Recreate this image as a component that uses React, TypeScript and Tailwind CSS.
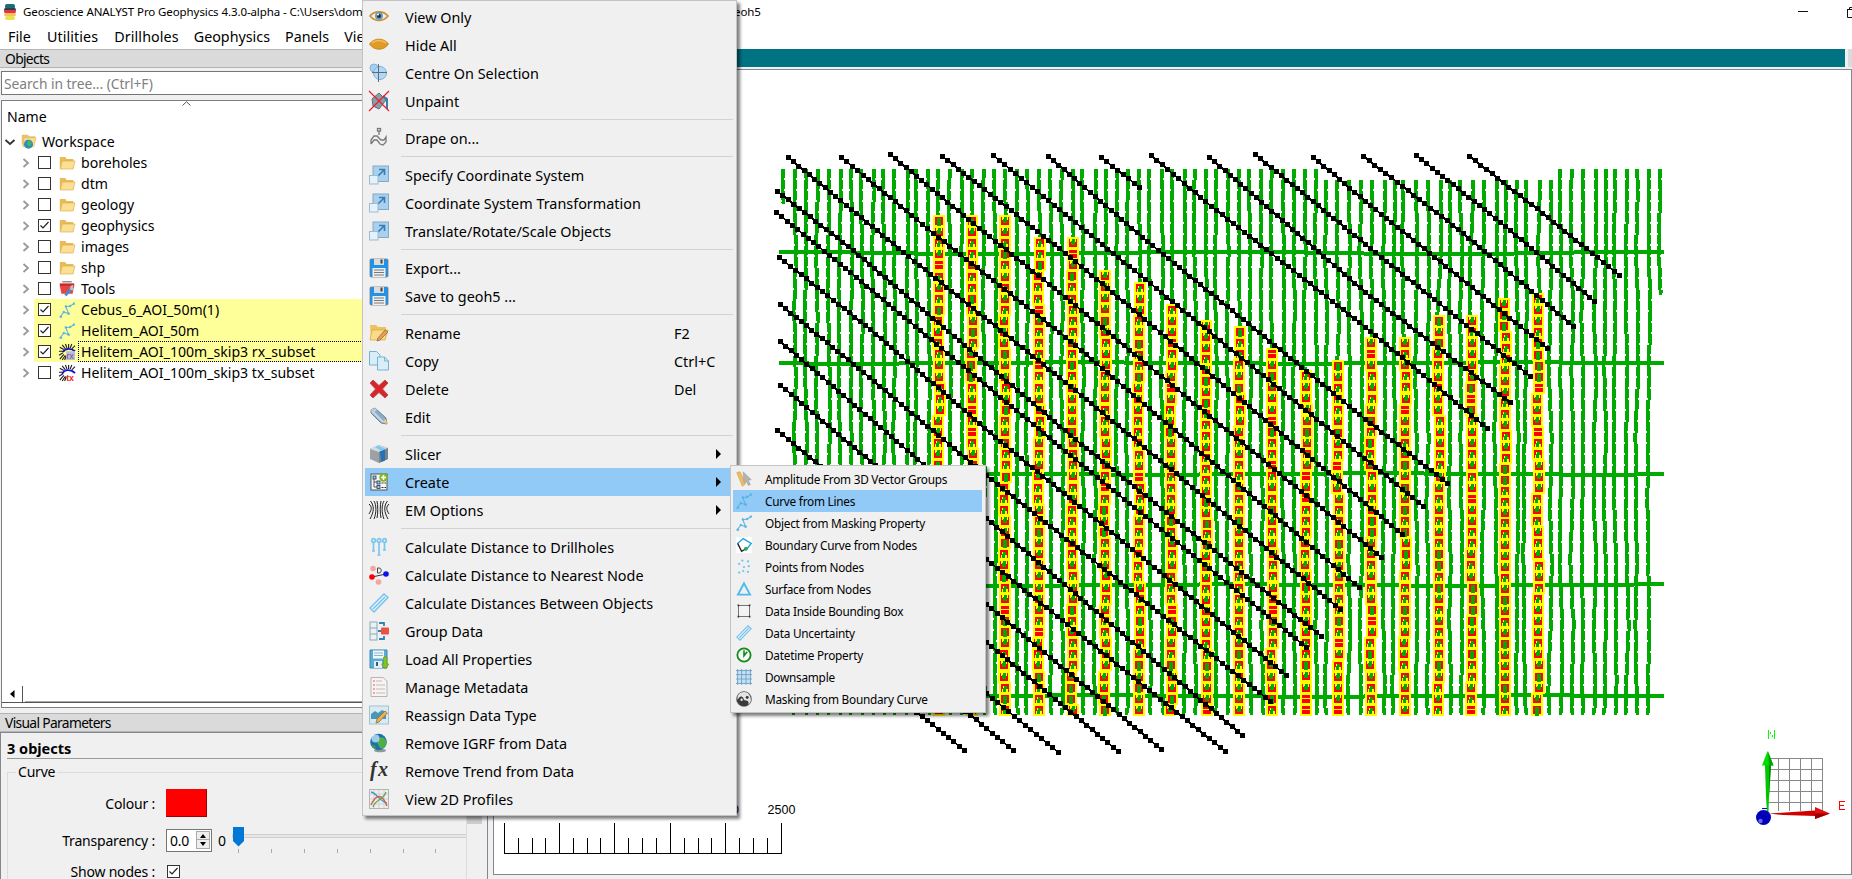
import React from "react";

/* ---------- icons ---------- */

type IconName =
  | "eye" | "lid" | "centre" | "unpaint" | "drape" | "scale" | "save" | "rename" | "copy" | "delete" | "edit"
  | "slicer" | "create" | "em" | "drill" | "nearest" | "ruler" | "group" | "load" | "meta" | "reassign"
  | "globe" | "fx" | "profiles" | "amplitude" | "curve" | "boundary" | "points" | "surface" | "box"
  | "clock" | "grid" | "yin" | "folder" | "workspace" | "tools" | "rx" | "tx";

const loop = "M8 1C9 5 9 14 8 18M5 1C7.500 5 7.500 13 5 19M1.500 1C5.500 6 5 12 1 19M0 4C3 7 3 9 0 14M12 1C11 5 11 14 12 18M15 1C12.500 5 12.500 13 15 19M18.500 1C14.500 6 15 12 19 19M20 4C17 7 17 9 20 14";
const coil = "M1 19L6 13M4 20L8 14M7 20L9 15M0 14L5 11M0 9L5 9M1 4L6 7M4 1L8 6M8 0L10 5M12 0L12 5M16 0L14 5M20 2L16 6";

const glyphs: Record<IconName, React.ReactNode> = {
  eye: (<><path d="M1 9C5 4 14 3 19 9C14 15 6 15 1 9Z" fill="#f4efe6" stroke="#c98f33" strokeWidth="1.600" /><circle cx="10" cy="9" r="4" fill="#6d9cb8" /><circle cx="10" cy="9" r="2" fill="#1c2f3a" /><circle cx="9" cy="7.500" r="1" fill="#fff" /></>),
  lid: (<><path d="M.5 9C5 2.500 15 2.500 19.500 9C15 16 5 16 .5 9Z" fill="#e09b26" stroke="#c27d12" strokeWidth=".8" /><path d="M3 8C7 4.500 13 4.500 17 8" fill="none" stroke="#f3c15c" strokeWidth="1.500" /></>),
  centre: (<><circle cx="5" cy="5" r="4" fill="#a6d0ee" stroke="#84b4d8" /><circle cx="11" cy="10" r="6.500" fill="#b2d9f3" stroke="#7fb0d4" /><path d="M9.500 1V19M3 9.500H18" stroke="#5a6e80" strokeWidth="1" /></>),
  unpaint: (<><path d="M3 8L10 2L17 9L10 18L4 15Z" fill="#8b9dab" stroke="#5d6c79" /><path d="M14 5L18 8V18" stroke="#3f7ca5" strokeWidth="2" fill="none" /><path d="M0 0L20 20M20 0L0 20" stroke="#e8202c" strokeWidth="1.200" /></>),
  drape: (<g fill="none" stroke="#777" strokeWidth="1.300"><rect x="8.500" y=".5" width="3" height="2.500" /><path d="M10 3V7M2 16V12L5 8L8 8L12 12L15 12L17 9V14L14 17L11 16L8 12L5 12L2 16" /></g>),
  scale: (<><rect x="4" y="1" width="15.500" height="15.500" fill="#a9d0ef" stroke="#82a9c6" /><path d="M9 11L15 5M10 4.500H15.500V10" stroke="#357db4" strokeWidth="1.600" fill="none" /><rect x=".5" y="10.500" width="8.500" height="8.500" fill="#e3f2fb" stroke="#9fbbce" /></>),
  save: (<><rect x="1" y="1" width="18" height="18" rx="1" fill="#1e93ee" stroke="#777f87" strokeWidth=".8" /><rect x="5" y="1" width="10" height="6" fill="#dcdcdc" /><rect x="11.500" y="1.500" width="2" height="4" fill="#444" /><rect x="3.500" y="10" width="13" height="9" fill="#f0f0f0" /><path d="M5 12H15M5 14.500H15M5 17H15" stroke="#777" strokeWidth="1.200" /></>),
  rename: (<><path d="M1 2H7L9 4H17V16H2Z" fill="#efc35c" /><path d="M3 7H19L16 17H1Z" fill="#fadb87" stroke="#d9a441" strokeWidth=".7" /><path d="M8 18L9 15L16 7L19 9L11 17Z" fill="#e8a04c" stroke="#8c6d4d" strokeWidth=".8" /></>),
  copy: (<g fill="#d9eef8" stroke="#74b4d0"><path d="M.5 .5H7.500L11 4V14H.5Z" /><path d="M8.500 6H15.500L19.500 10V19H8.500Z" /><path d="M15.500 6V10H19.500" fill="none" /></g>),
  delete: (<path d="M1 4L4 1L10 6.500L16 1L19 4L13.500 10L19 16L16 19L10 13.500L4 19L1 16L6.500 10Z" fill="#d8252b" stroke="#b2484b" strokeWidth=".8" />),
  edit: (<><path d="M2 3L6 1L17 11L18 17L12 16L2 6Z" fill="#8cabc9" stroke="#5b7087" strokeWidth=".8" /><path d="M4 5L14 15" stroke="#c3d9ea" strokeWidth="2" /><path d="M13 15L17 12L18 17Z" fill="#efca86" /><path d="M2 3L6 1L8 3L3 7Z" fill="#c5ccd4" /></>),
  slicer: (<><path d="M1 5L10 1L19 4V15L10 19L1 15Z" fill="#9aa1a7" /><path d="M1 5L10 1L19 4L10 8Z" fill="#d5dbdf" /><path d="M10 8L19 4V15L10 19Z" fill="#7b8288" /><path d="M11 7.500L16 5V16.500L12.500 18Z" fill="#2172b8" /><path d="M6 3L9 1.500L17 5L12 7Z" fill="#7ccbf0" /></>),
  create: (<><rect x="2" y="2" width="16" height="16" fill="#f8f8f8" stroke="#555" /><path d="M5 6V15H8M5 10H8" stroke="#234" strokeWidth=".8" fill="none" /><g fill="#9fd0f2" stroke="#234" strokeWidth=".8"><rect x="4" y="4" width="3" height="3" /><rect x="8" y="9" width="3" height="3" /><rect x="8" y="13.500" width="3" height="3" /></g><path d="M12.500 11H17M12.500 15.500H17" stroke="#234" strokeDasharray="2 1" /><circle cx="14.500" cy="5.500" r="4.200" fill="#83b81a" /><path d="M14.500 3V8M12 5.500H17" stroke="#fff" strokeWidth="1.600" /></>),
  em: (<path d={loop} stroke="#222" fill="none" strokeWidth="1" />),
  drill: (<g stroke="#7bc6ee" fill="none" strokeWidth="1.700"><circle cx="4.500" cy="3.500" r="1.800" /><circle cx="10" cy="3.500" r="1.800" /><circle cx="15.500" cy="3.500" r="1.800" /><path d="M4.500 5V14M10 5V18M15.500 5V13M3 14H6M8.500 18H11.500M14 13H17" /></g>),
  nearest: (<><path d="M3 12L17 9" stroke="#333" /><circle cx="4" cy="3.500" r="2.800" fill="#f5a3a3" /><circle cx="9.500" cy="17" r="2.800" fill="#f5a3a3" /><circle cx="3" cy="12" r="2.800" fill="#f00" /><circle cx="17" cy="9" r="2.800" fill="#0a14f0" /><path d="M8.500 3V8H10C13 8 13 3 10 3Z" fill="none" stroke="#444" /></>),
  ruler: (<g stroke="#75bfe8" strokeWidth="1.300"><path d="M1 15L15 1L19 4.500L5 19Z" fill="#dff1fb" /><path d="M4 16L16 4" /></g>),
  group: (<><rect x="1" y="1" width="7" height="18" fill="#e9f1f5" stroke="#8da7b6" /><path d="M1 7H8M1 13H8" stroke="#8da7b6" /><path d="M10 2H15V5M10 18H15V15M12 10H9" stroke="#2b84bd" strokeWidth="1.800" fill="none" /><rect x="12" y="6.500" width="8" height="7" rx="1" fill="#ec5244" /></>),
  load: (<><path d="M1 1H18V19H1Z" fill="#5badd9" stroke="#4187b1" /><rect x="4" y="1.500" width="11" height="8" fill="#f3f8fa" /><path d="M5 4H14M5 6.500H14" stroke="#8fb3c8" /><rect x="5" y="12" width="8" height="7" fill="#e5edf2" /><path d="M8 13V17" stroke="#35617e" strokeWidth="2" /><path d="M14.500 8H18V15H20L16.200 20L12.500 15H14.500Z" fill="#86c11d" stroke="#669b10" strokeWidth=".6" /></>),
  meta: (<><path d="M2 .5H14L18 4V19.500H2Z" fill="#f6f3f2" stroke="#b7b4b2" /><path d="M4 4H6M4 8H6M4 12H6M4 16H6" stroke="#e88f8a" strokeWidth="1.500" /><path d="M7 4H13M7 8H16M7 12H16M7 16H16" stroke="#c0bcba" strokeWidth="1.200" /></>),
  reassign: (<><rect x=".5" y="1" width="19" height="18" fill="#d8ebf3" stroke="#9fc3d2" /><path d="M2 9L6 6L9 8L13 5L17 7V14H2Z" fill="#4b98b5" /><path d="M7 18L8 14L16 6L18.500 8L10 17Z" fill="#eeb04f" stroke="#8e7048" strokeWidth=".8" /></>),
  globe: (<><ellipse cx="11" cy="17.500" rx="6" ry="1.800" fill="#8c979f" /><circle cx="9.500" cy="9" r="8.300" fill="#1d6fb0" /><path d="M10 5C14 3 17 6 17.500 10C16 15 13 17 11 15C9 12 7 9 10 5Z" fill="#4fae48" /><path d="M2 12C5 11 7 13 7 16C4 15 3 14 2 12Z" fill="#3c9c4a" /><circle cx="6.500" cy="5.500" r="4" fill="#c9ebfa" opacity=".75" /></>),
  fx: (<text x="1" y="15" fontFamily="Liberation Serif, serif" fontStyle="italic" fontWeight="700" fontSize="20" textLength="18" fill="#333">fx</text>),
  profiles: (<><rect x=".5" y=".5" width="19" height="19" fill="#eee" stroke="#b4b4b4" /><path d="M5 1V19M10 1V19M15 1V19M1 5H19M1 10H19M1 15H19" stroke="#d2d2d2" /><path d="M2 3C8 4 11 13 18 14" stroke="#3b9ac4" fill="none" strokeWidth="1.300" /><path d="M2 16C7 5 13 4 18 17" stroke="#d06045" fill="none" strokeWidth="1.300" /><path d="M4 18C6 10 14 12 17 3" stroke="#68a356" fill="none" strokeWidth="1.300" /></>),
  amplitude: (<><path d="M1 2L5 1L12 16L8 19Z" fill="#efbf5f" stroke="#d39b3c" strokeWidth=".8" /><path d="M9 1L19 11L15 11.500L18 17L15.500 18L13 13L10 15Z" fill="#b3b3b3" stroke="#999" strokeWidth=".7" /></>),
  curve: (<g stroke="#58b4e4" fill="#58b4e4"><path d="M2 18L6 12.500L12 14.500L8.500 6L14 5L19 2" fill="none" strokeWidth="1.300" /><path d="M1 17.500H3.500V19.500H1ZM5 11.500H7V13.500H5ZM11 13.500H13V15.500H11ZM7.500 4.500H9.500V6.500H7.500ZM13 4H15V6H13ZM17.500 1H19.500V3H17.500Z" strokeWidth=".6" /></g>),
  boundary: (<><rect width="20" height="20" fill="#fff" /><path d="M2 8L9 2L19 8L12 17" stroke="#1ba3dc" strokeWidth="1.700" fill="none" /><path d="M2 8L7 18L12 15" stroke="#222" strokeWidth="1.700" fill="none" /><circle cx="12.500" cy="14.500" r="2.400" fill="#28b04a" /></>),
  points: (<g fill="#6cc3ef"><circle cx="4" cy="6" r="1.400" /><circle cx="8" cy="2" r="1.400" /><circle cx="15" cy="3" r="1.400" /><circle cx="10" cy="10" r="1.400" /><circle cx="16" cy="9" r="1.400" /><circle cx="4" cy="17" r="1.400" /><circle cx="9" cy="15" r="1.400" /><circle cx="15" cy="16" r="1.400" /></g>),
  surface: (<path d="M10 3L17.500 17H2.500Z" fill="none" stroke="#4fb9ec" strokeWidth="2.400" />),
  box: (<><rect x="3" y="3" width="14" height="14" fill="#f3f3f3" stroke="#555" /><path d="M2 2H4V4H2ZM16 2H18V4H16ZM2 16H4V18H2ZM16 16H18V18H16Z" fill="#333" /></>),
  clock: (<><circle cx="10" cy="10" r="8.300" fill="#f6fbf6" stroke="#128a1c" strokeWidth="2.200" /><path d="M10 4V11L14 6" stroke="#128a1c" strokeWidth="2" fill="none" /></>),
  grid: (<><rect x="1" y="1" width="18" height="18" fill="#c4e2f6" /><path d="M0 2H20M0 7H20M0 12.500H20M0 18H20M2 0V20M7 0V20M12.500 0V20M18 0V20" stroke="#6f9fc0" strokeWidth="1.100" /></>),
  yin: (<><circle cx="10" cy="10" r="9.500" fill="#3a3a3a" stroke="#777" strokeWidth=".6" /><path d="M8 1.500A9 9 0 0 1 15 17.500C17 14 15 12 12 12C9 12 10 8 7 7C4 6 3 10 2 11C1 6 4 2 8 1.500Z" fill="#e4e4e4" /><circle cx="14" cy="8" r="1.800" fill="#333" /><circle cx="7" cy="11" r="1.500" fill="#eee" /></>),
  folder: (<><path d="M1 2.500H8L9.500 5H18V17H1Z" fill="#eabb57" /><path d="M4 7.500H20L17.500 17.500H1.500Z" fill="#fbdf92" stroke="#ddac4c" strokeWidth=".8" /></>),
  workspace: (<><path d="M1 1H9L11 3H19V8L16 17H3L1 13Z" fill="#ecc168" /><path d="M4 5H20L17 17H3Z" fill="#f9dc92" stroke="#dbb05a" strokeWidth=".7" /><circle cx="10" cy="13.500" r="6" fill="#2c8dc2" /><path d="M10 9C14 9 15 12 13 15C10 18 9 15 8 12Z" fill="#53b64d" /></>),
  tools: (<><path d="M1 3H19V7H1Z" fill="#c62827" /><path d="M1 6H19L17 16H3Z" fill="#e54740" /><path d="M4 1H16" stroke="#777" strokeWidth="1.500" /><path d="M8 18L15 10" stroke="#3f8fd0" strokeWidth="3.500" /><path d="M14 11C13 7 15 5 18 5L17 8L19 9C19 12 16 12 14 11Z" fill="#b6c2ca" /></>),
  rx: (<><path d={coil} stroke="#222" strokeWidth="1.400" fill="none" /><path d="M5 10C8 5 15 5 20 9" stroke="#1414a4" strokeWidth="2.200" fill="none" /><rect x="9" y="9" width="11" height="11" fill="#aebfe8" /><text x="9.500" y="18.500" fontSize="11" fontFamily="Liberation Sans, sans-serif" fill="#b03a62">rx</text></>),
  tx: (<><path d={coil} stroke="#222" strokeWidth="1.400" fill="none" /><path d="M4 11C7 5 15 5 20 10" stroke="#1414d4" strokeWidth="2.400" fill="none" /><text x="9" y="20" fontSize="11" fontWeight="700" fontFamily="Liberation Sans, sans-serif" fill="#e22">tx</text></>),
};

function Icon({ name, size = 20 }: { name: IconName; size?: number }) {
  return <svg width={size} height={size} viewBox="0 0 20 20" className="shrink-0 overflow-visible">{glyphs[name]}</svg>;
}

/* ---------- object tree ---------- */

function Check({ on }: { on?: boolean }) {
  return (
    <span className="flex h-[13px] w-[13px] shrink-0 items-center justify-center border border-[#333] bg-white">
      {on && <svg width="11" height="11" viewBox="0 0 11 11"><path d="M1.500 5.500L4 8L9.500 2" fill="none" stroke="#222" strokeWidth="1.200" /></svg>}
    </span>
  );
}

type TreeItem = { label: string; icon: IconName; on?: boolean; selected?: boolean; focus?: boolean };
const tree: TreeItem[] = [
  { label: "boreholes", icon: "folder" },
  { label: "dtm", icon: "folder" },
  { label: "geology", icon: "folder" },
  { label: "geophysics", icon: "folder", on: true },
  { label: "images", icon: "folder" },
  { label: "shp", icon: "folder" },
  { label: "Tools", icon: "tools" },
  { label: "Cebus_6_AOI_50m(1)", icon: "curve", on: true, selected: true },
  { label: "Helitem_AOI_50m", icon: "curve", on: true, selected: true },
  { label: "Helitem_AOI_100m_skip3 rx_subset", icon: "rx", on: true, selected: true, focus: true },
  { label: "Helitem_AOI_100m_skip3 tx_subset", icon: "tx" },
];

function TreeRow({ item }: { item: TreeItem }) {
  return (
    <div className="flex h-[21px] shrink-0 pl-5">
      <div className="flex w-3 shrink-0 items-center">
        <svg width="10" height="12" viewBox="0 0 10 12"><path d="M1.500 2L6 6L1.500 10" fill="none" stroke="#999" strokeWidth="1.800" /></svg>
      </div>
      <div className={item.selected ? "flex grow items-center bg-[#ffff99] pl-1" : "flex grow items-center pl-1"}>
        <Check on={item.on} />
        <span className="ml-2 flex"><Icon name={item.icon} size={16} /></span>
        <span className={item.focus ? "ml-[3px] h-[21px] grow border border-dotted border-black pl-[2px] leading-[19px]" : "ml-1.5 leading-[21px]"}>{item.label}</span>
      </div>
    </div>
  );
}

function PanelTitle({ children }: { children: React.ReactNode }) {
  return <div className="flex h-[19px] shrink-0 items-center border-y border-[#b4b4b4] bg-[#dadada] pt-0.5 pl-[5px] text-[13.800px] tracking-[-0.65px]">{children}</div>;
}

function ObjectsPanel() {
  return (
    <section className="flex shrink-0 flex-col">
      <PanelTitle>Objects</PanelTitle>
      <div className="mt-[3px] ml-px flex h-6 items-center border border-[#767676] bg-white pt-0.5 pl-[2px] text-[13.800px] tracking-[-0.05px] text-[#808080]">Search in tree... (Ctrl+F)</div>
      <div className="mt-[5px] ml-px flex h-[608px] flex-col border border-[#7a7f88] bg-white text-[14.100px]">
        <div className="flex h-1.5 shrink-0 justify-center pr-[116px]">
          <svg width="9" height="5" viewBox="0 0 9 5"><path d="M.5 4.500L4.500 .8L8.500 4.500" fill="none" stroke="#555" /></svg>
        </div>
        <div className="h-6 shrink-0 pl-[5px] leading-[20px]">Name</div>
        <div className="flex h-[21px] shrink-0 items-center pl-[2px]">
          <svg width="12" height="12" viewBox="0 0 12 12"><path d="M1.500 4L6 8L10.500 4" fill="none" stroke="#333" strokeWidth="1.800" /></svg>
          <span className="ml-[5px] flex"><Icon name="workspace" size={15} /></span>
          <span className="ml-[6px] leading-[22px]">Workspace</span>
        </div>
        {tree.map((t) => <TreeRow key={t.label} item={t} />)}
        <div className="mt-auto flex h-[17px] border-b border-[#555] bg-white">
          <div className="flex w-[21px] items-center justify-center border-r border-[#555]">
            <svg width="5" height="8" viewBox="0 0 5 8"><path d="M4.500 0V8L0 4Z" fill="#000" /></svg>
          </div>
          <div className="ml-[2px] grow border-b border-[#aaa]" />
        </div>
        <div className="h-1 shrink-0" />
      </div>
    </section>
  );
}

function VisualParameters() {
  return (
    <section className="mt-[5px] flex min-h-0 grow flex-col">
      <PanelTitle>Visual Parameters</PanelTitle>
      <div className="flex min-h-0 grow flex-col border-t border-l border-[#828790] pl-1.5 text-[14px]">
        <div className="h-[26px] shrink-0 border-b border-[#999] text-[14.500px] leading-[30px] font-bold">3 objects</div>
        <div className="flex min-h-0 grow">
          <fieldset className="mt-[3px] w-[459px] shrink-0 border border-b-0 border-[#dcdcdc] tracking-[-0.2px]">
            <legend className="ml-2 px-[2px] leading-[20px]">Curve</legend>
            <div className="flex h-[42px] items-center">
              <span className="w-[147px] text-right">Colour :</span>
              <span className="ml-[11px] h-7 w-[41px] border-r border-b border-[#a00000] bg-[#ff0000]" />
            </div>
            <div className="flex h-[32px] items-center">
              <span className="w-[147px] text-right">Transparency :</span>
              <span className="ml-[11px] flex h-[23px] w-[46px] items-center justify-between border border-[#767676] bg-white pr-px pl-[3px]">
                0.0
                <span className="flex h-[18px] w-[14px] flex-col border border-[#aaa] bg-[#eee]">
                  <span className="flex h-2 items-center justify-center border-b border-[#aaa]"><svg width="6" height="4" viewBox="0 0 6 4"><path d="M0 4H6L3 0Z" /></svg></span>
                  <span className="flex h-2 items-center justify-center"><svg width="6" height="4" viewBox="0 0 6 4"><path d="M0 0H6L3 4Z" /></svg></span>
                </span>
              </span>
              <span className="ml-1.5">0</span>
              <svg width="236" height="28" viewBox="0 0 236 28" className="mt-px ml-1 shrink-0">
                <rect x="2.500" y="7.500" width="240" height="3" fill="#e7e7e7" stroke="#d0d0d0" />
                <path d="M3 0H14V14L8.500 19.500L3 14Z" fill="#0078d7" />
                {[8, 41, 74, 107, 140, 173, 205].map((x) => <rect key={x} x={x} y="22" width="1" height="4" fill="#aaa" />)}
              </svg>
            </div>
            <div className="flex h-[30px] items-center leading-[13px]">
              <span className="w-[147px] text-right">Show nodes :</span>
              <span className="ml-[12px] flex"><Check on /></span>
            </div>
          </fieldset>
          <div className="flex w-[15px] flex-col bg-[#f0f0f0]"><div className="h-[65px] bg-[#cdcdcd]" /></div>
          <div className="grow border-r border-[#828790]" />
        </div>
      </div>
    </section>
  );
}

/* ---------- survey map ---------- */

const rnd = (a: number, b: number) => {
  const s = Math.sin(a * 12.9898 + b * 78.233) * 43758.5453;
  return s - Math.floor(s);
};

const flightX = [
  784, 795, 806, 817, 829, 840, 851, 862, 873, 884, 894, 907, 916, 929, 939, 950, 962, 972, 984, 995, 1006, 1017, 1027, 1040,
  1051, 1062, 1072, 1083, 1095, 1106, 1117, 1127, 1139, 1150, 1162, 1172, 1184, 1195, 1206, 1216, 1228, 1239, 1250, 1262, 1272,
  1283, 1294, 1305, 1316, 1326, 1338, 1349, 1361, 1372, 1384, 1394, 1404, 1416, 1428, 1439, 1450, 1461, 1472, 1483, 1496, 1505,
  1517, 1525, 1539, 1550, 1561, 1572, 1583, 1595, 1605, 1615, 1627, 1637, 1649, 1660,
];
const tieY = [253, 363, 474, 585, 696];

const columns: [number, number][] = [
  [939, 215], [972, 215], [1005, 215], [1039, 237], [1072, 237], [1105, 270], [1139, 282], [1171, 304], [1206, 320], [1239, 326],
  [1272, 348], [1306, 370], [1338, 360], [1371, 337], [1405, 337], [1439, 315], [1472, 315], [1505, 298], [1538, 293],
];

const magLines: number[][] = [
  [788, 157, 903, 252, 1070, 386, 1340, 609],
  [841, 157, 938, 237, 1070, 341, 1359, 587],
  [890, 154, 968, 219, 1070, 301, 1381, 557],
  [942, 156, 1032, 227, 1070, 257, 1402, 534],
  [993, 155, 1070, 218, 1423, 506],
  [1048, 156, 1147, 241, 1370, 423, 1447, 483],
  [1101, 157, 1139, 187],
  [1151, 155, 1200, 197, 1370, 331, 1487, 428],
  [1209, 157, 1370, 296, 1510, 402],
  [1255, 154, 1370, 248, 1530, 376],
  [1313, 157, 1370, 205, 1547, 348],
  [1363, 156, 1458, 229, 1573, 326],
  [1416, 155, 1505, 226, 1594, 301],
  [1469, 156, 1531, 204, 1619, 275],
  [777, 191, 853, 250, 1070, 435, 1321, 636],
  [776, 212, 845, 268, 1070, 455, 1306, 647],
  [779, 257, 865, 325, 1000, 441, 1286, 675],
  [780, 304, 858, 368, 986, 475, 1270, 701],
  [780, 341, 986, 518, 1242, 735],
  [780, 385, 986, 559, 1225, 751],
  [777, 430, 986, 604, 1161, 749],
  [786, 480, 986, 642, 1118, 751],
  [786, 528, 986, 693, 1058, 752],
  [800, 575, 1013, 750],
  [800, 618, 964, 750],
];

/* Each line is a stack of short 4px bars; a 3px bar marks the gap between readings. */
function FlightLines() {
  return (
    <g fill="#00aa00">
      {flightX.map((x, i) => {
        const top = x > 1320 && x < 1555 ? 180 : 169;
        const end = i === 0 ? 204 : x === 1660 ? 295 : 715;
        const amp = x > 1300 ? 1.7 : 1.1;
        let d = "";
        for (let y = top; y < end; y += 11) {
          const seg = y / 62;
          const a = rnd(i, Math.floor(seg));
          const b = rnd(i, Math.floor(seg) + 1);
          const t = seg - Math.floor(seg);
          const off = Math.round((a + (b - a) * t - 0.5) * 2 * amp);
          const h = Math.min(11, end - y);
          d += `M${x - 2 + off} ${y}h4v${Math.max(1, h - 2)}h-4z`;
          d += `M${x - 2 + off + (rnd(i, y) > 0.5 ? 1 : 0)} ${y + h - 2}h3v2h-3z`;
        }
        return <path key={x} d={d} />;
      })}
      {tieY.map((y, j) => {
        let d = "";
        for (let x = 779; x < 1664; x += 15) {
          const off = Math.round(Math.sin(x / 70 + j * 2) * (j === 0 ? 1.2 : 0.6));
          d += `M${x} ${y - 2 + off}h${Math.min(15, 1664 - x)}v4h-${Math.min(15, 1664 - x)}z`;
        }
        return <path key={y} d={d} />;
      })}
    </g>
  );
}

function StationColumns() {
  return (
    <g>
      {columns.map(([cx, top], c) => {
        const n = Math.round((715 - top) / 11.1);
        const pitch = (715 - top) / n;
        return Array.from({ length: n }, (_, k) => {
          const r = rnd(c + 1, k);
          const drift = rnd(c + 7, Math.floor(k / 3));
          const x = cx + (drift > 0.78 ? 1 : drift < 0.15 ? -1 : 0);
          const y = Math.round(top + k * pitch);
          const up = r < 0.4;
          const down = r >= 0.4 && r < 0.82;
          const bars = r >= 0.82 && r < 0.86;
          return (
            <g key={`${c}-${k}`}>
              <rect x={x - 6} y={y} width="12" height="12" fill="#ffff00" />
              <rect x={x - 4} y={y + 2} width="8" height="8" fill="#ff0000" />
              {up && <path d={`M${x - 2} ${y + 4}h4v3h1v3h-6v-3h1z`} fill="#ffff00" />}
              {down && <path d={`M${x - 3} ${y + 2}h6v3h-1v3h-4v-3h-1z`} fill="#ffff00" />}
              {bars && <path d={`M${x - 4} ${y + 5}h8v1h-8z`} fill="#ffff00" />}
              {up && <path d={`M${x - 1} ${y + 4}h3v3h-1v3h-3v-4h1z`} fill="#00aa00" />}
              {down && <path d={`M${x - 1} ${y + 2}h3v6h-4v-4h1z`} fill="#00aa00" />}
              {r >= 0.86 && <path d={`M${x - 2} ${y + 3}h4v9h-4z`} fill="#00aa00" />}
            </g>
          );
        });
      })}
    </g>
  );
}

function MagLines() {
  return (
    <g shapeRendering="crispEdges">
      {magLines.map((p, i) => {
        const dots: [number, number][] = [];
        for (let s = 0; s + 3 < p.length; s += 2) {
          const [x1, y1, x2, y2] = [p[s], p[s + 1], p[s + 2], p[s + 3]];
          const n = Math.max(1, Math.round(Math.hypot(x2 - x1, y2 - y1) / 6.9));
          for (let k = s ? 1 : 0; k <= n; k++) dots.push([Math.round(x1 + ((x2 - x1) * k) / n), Math.round(y1 + ((y2 - y1) * k) / n)]);
        }
        return (
          <g key={i}>
            <polyline points={dots.map(([x, y]) => `${x + 0.5},${y + 0.5}`).join(" ")} fill="none" stroke="#000" strokeWidth="2" />
            <path d={dots.map(([x, y]) => `M${x - 2} ${y - 2}h5v5h-5z`).join("")} fill="#000" />
          </g>
        );
      })}
    </g>
  );
}

function ScaleBar() {
  const major = [504, 559, 614, 670, 725, 781];
  return (
    <g shapeRendering="crispEdges">
      <path d={`M504 853.500H782${major.map((x) => `M${x + 0.5} 823V853`).join("")}`} stroke="#000" fill="none" />
      <path d={major.slice(0, 5).flatMap((x, i) => [1, 2, 3].map((k) => `M${Math.round(x + ((major[i + 1] - x) * k) / 4) + 0.5} 838V853`)).join("")} stroke="#000" fill="none" />
      <g fontFamily="Liberation Sans, sans-serif" fontSize="12.500" textAnchor="middle" fill="#000">
        <text x="725" y="814">2000</text>
        <text x="781.500" y="814">2500</text>
      </g>
    </g>
  );
}

function AxisGizmo() {
  return (
    <g>
      <path d="M1767.500 758.500H1822.500V811.500M1778.500 758V811M1789.500 758V811M1800.500 758V811M1811.500 758V811M1768 769.500H1823M1768 780.500H1823M1768 791.500H1823M1768 802.500H1823" stroke="#888" fill="none" shapeRendering="crispEdges" />
      <path d="M1765 765H1771L1769 797L1768.500 812H1767L1766 797Z" fill="#00c800" />
      <path d="M1769 765H1771L1769 797Z" fill="#008a00" />
      <path d="M1767.500 751L1773.500 765.500H1762Z" fill="#00e000" />
      <path d="M1768 751L1773.500 765.500H1769Z" fill="#07a007" />
      <path d="M1769 813.500L1815 810.500V816L1783 815Z" fill="#d00000" />
      <path d="M1815 807L1830 813.500L1815 819Z" fill="#e31010" />
      <path d="M1815 813.500H1830L1815 819Z" fill="#990000" />
      <path d="M1762 808.500H1767" stroke="#00f" />
      <circle cx="1763.500" cy="817.500" r="7.500" fill="#0000b8" />
      <circle cx="1760.500" cy="821" r="2.200" fill="#6767ee" />
      <path d="M1768.500 739V730M1774.500 739V730M1770.500 732V734M1772.500 735V737" stroke="#00ff00" fill="none" shapeRendering="crispEdges" />
      <path d="M1845 801.500H1839.500V809.500H1845M1840 805.500H1844" stroke="#ff0000" fill="none" shapeRendering="crispEdges" />
    </g>
  );
}

function MapView() {
  return (
    <section className="flex grow flex-col bg-[#f0f0f0] pb-1">
      <div className="flex h-[18px] shrink-0 justify-between"><div className="w-[1352px] bg-[#007383]" /><div className="w-1 bg-[#dadada]" /></div>
      <div className="mt-[2px] flex grow border border-[#828790] bg-white">
        <svg width="1357" height="804" viewBox="494 70 1357 804" className="block shrink-0">
          <g shapeRendering="crispEdges"><FlightLines /><StationColumns /></g>
          <MagLines />
          <ScaleBar />
          <AxisGizmo />
        </svg>
      </div>
    </section>
  );
}

/* ---------- menus ---------- */

type Entry = { label: string; icon: IconName; key?: string; sub?: boolean; active?: boolean };
const groups: Entry[][] = [
  [
    { label: "View Only", icon: "eye" },
    { label: "Hide All", icon: "lid" },
    { label: "Centre On Selection", icon: "centre" },
    { label: "Unpaint", icon: "unpaint" },
  ],
  [{ label: "Drape on...", icon: "drape" }],
  [
    { label: "Specify Coordinate System", icon: "scale" },
    { label: "Coordinate System Transformation", icon: "scale" },
    { label: "Translate/Rotate/Scale Objects", icon: "scale" },
  ],
  [
    { label: "Export...", icon: "save" },
    { label: "Save to geoh5 ...", icon: "save" },
  ],
  [
    { label: "Rename", icon: "rename", key: "F2" },
    { label: "Copy", icon: "copy", key: "Ctrl+C" },
    { label: "Delete", icon: "delete", key: "Del" },
    { label: "Edit", icon: "edit" },
  ],
  [
    { label: "Slicer", icon: "slicer", sub: true },
    { label: "Create", icon: "create", sub: true, active: true },
    { label: "EM Options", icon: "em", sub: true },
  ],
  [
    { label: "Calculate Distance to Drillholes", icon: "drill" },
    { label: "Calculate Distance to Nearest Node", icon: "nearest" },
    { label: "Calculate Distances Between Objects", icon: "ruler" },
    { label: "Group Data", icon: "group" },
    { label: "Load All Properties", icon: "load" },
    { label: "Manage Metadata", icon: "meta" },
    { label: "Reassign Data Type", icon: "reassign" },
    { label: "Remove IGRF from Data", icon: "globe" },
    { label: "Remove Trend from Data", icon: "fx" },
    { label: "View 2D Profiles", icon: "profiles" },
  ],
];

const createEntries: Entry[] = [
  { label: "Amplitude From 3D Vector Groups", icon: "amplitude" },
  { label: "Curve from Lines", icon: "curve", active: true },
  { label: "Object from Masking Property", icon: "curve" },
  { label: "Boundary Curve from Nodes", icon: "boundary" },
  { label: "Points from Nodes", icon: "points" },
  { label: "Surface from Nodes", icon: "surface" },
  { label: "Data Inside Bounding Box", icon: "box" },
  { label: "Data Uncertainty", icon: "ruler" },
  { label: "Datetime Property", icon: "clock" },
  { label: "Downsample", icon: "grid" },
  { label: "Masking from Boundary Curve", icon: "yin" },
];

function ContextMenu() {
  return (
    <div className="absolute top-0 left-[362px] w-[375px] border border-[#c4c4c4] bg-[#f0f0f0] px-[2px] py-[2px] text-[14.400px] shadow-[3px_3px_3px_rgba(0,0,0,0.5)]">
      {groups.map((g, i) => (
        <div key={i}>
          {i > 0 && <div className="flex h-[9px] items-center pr-px pl-9"><div className="h-px grow bg-[#d2d2d2]" /></div>}
          {g.map((e) => (
            <div key={e.label} className={e.active ? "flex h-7 items-center bg-[#91c9f7] pl-1" : "flex h-7 items-center pl-1"}>
              <Icon name={e.icon} />
              <span className="ml-4 w-[269px] pt-0.5 whitespace-nowrap">{e.label}</span>
              {e.key && <span className="pt-0.5">{e.key}</span>}
              {e.sub && <svg width="5" height="10" viewBox="0 0 5 10" className="ml-[42px]"><path d="M0 0V10L5 5Z" fill="#000" /></svg>}
            </div>
          ))}
        </div>
      ))}
    </div>
  );
}

function CreateMenu() {
  return (
    <div className="absolute top-[465px] left-[730px] w-[256px] border border-[#c4c4c4] bg-[#f0f0f0] px-[2px] py-[2px] text-[11.800px] tracking-[-0.25px] shadow-[3px_3px_3px_rgba(0,0,0,0.5)]">
      {createEntries.map((e) => (
        <div key={e.label} className={e.active ? "mr-px flex h-[22px] items-center bg-[#91c9f7] pl-[3px]" : "flex h-[22px] items-center pl-[3px]"}>
          <Icon name={e.icon} size={16} />
          <span className="ml-[13px] pt-0.5 whitespace-nowrap">{e.label}</span>
        </div>
      ))}
    </div>
  );
}

export default function App() {
  return (
    <div className="relative flex h-[879px] w-[1852px] flex-col overflow-hidden bg-white font-['Noto_Sans',sans-serif] text-black">
      <header className="flex h-6 shrink-0 items-center pl-1 text-[11.500px] tracking-[-0.09px]">
        <svg width="12" height="16" viewBox="0 0 12 16">
          <rect x="1" y="0" width="10" height="5" rx="2" fill="#15707a" />
          <rect x="0" y="4" width="12" height="3" rx="1.500" fill="#3d3a45" />
          <rect x="0" y="6" width="12" height="3" rx="1.500" fill="#e0334f" />
          <rect x="0" y="9" width="12" height="3" rx="1.500" fill="#f5c25a" />
          <rect x="1" y="12" width="10" height="4" rx="2" fill="#e9e14e" />
        </svg>
        <span className="ml-[7px] w-[704px] whitespace-nowrap">Geoscience ANALYST Pro Geophysics 4.3.0-alpha - C:\Users\dom</span>
        <span>geoh5</span>
        <svg width="54" height="12" viewBox="0 0 54 12" className="ml-auto"><path d="M0 5.500H10M49 3.500H54M51.500 3V1.500H54M49.500 3V11.500H54" stroke="#111" fill="none" /></svg>
      </header>
      <nav className="flex h-[25px] shrink-0 items-start gap-4 pl-2 text-[14.300px] leading-[26px]">
        <span>File</span><span className="tracking-[0.1px]">Utilities</span><span className="tracking-[0.1px]">Drillholes</span><span className="-ml-px">Geophysics</span><span className="-ml-px">Panels</span><span className="-ml-px">View</span>
      </nav>
      <main className="flex min-h-0 grow">
        <div className="flex w-[488px] shrink-0 flex-col overflow-hidden bg-[#f0f0f0]">
          <ObjectsPanel />
          <VisualParameters />
        </div>
        <div className="w-[5px] shrink-0 bg-[#f0f0f0]" />
        <MapView />
      </main>
      <ContextMenu />
      <CreateMenu />
    </div>
  );
}
